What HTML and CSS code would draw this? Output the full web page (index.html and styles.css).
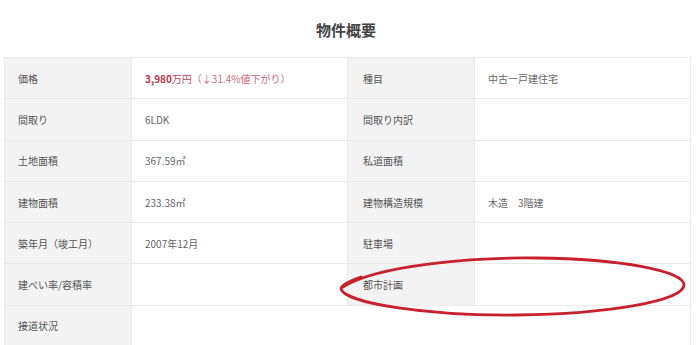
FILE: index.html
```html
<!DOCTYPE html>
<html lang="ja">
<head>
  <meta charset="UTF-8">
  <title>物件概要</title>
  <link rel="stylesheet" href="styles.css">
</head>
<body>
  <div class="wrap">
    <h2>物件概要</h2>
    <table class="spec">
      <tr>
        <th>価格</th>
        <td class="price"><strong>3,980</strong>万円<span class="down">（↓31.4%値下がり）</span></td>
        <th>種目</th>
        <td>中古一戸建住宅</td>
      </tr>
      <tr>
        <th>間取り</th>
        <td>6LDK</td>
        <th>間取り内訳</th>
        <td></td>
      </tr>
      <tr>
        <th>土地面積</th>
        <td>367.59㎡</td>
        <th>私道面積</th>
        <td></td>
      </tr>
      <tr>
        <th>建物面積</th>
        <td>233.38㎡</td>
        <th>建物構造規模</th>
        <td>木造　3階建</td>
      </tr>
      <tr>
        <th>築年月（竣工月）</th>
        <td>2007年12月</td>
        <th>駐車場</th>
        <td></td>
      </tr>
      <tr>
        <th>建ぺい率/容積率</th>
        <td></td>
        <th>都市計画</th>
        <td></td>
      </tr>
      <tr>
        <th>接道状況</th>
        <td colspan="3"></td>
      </tr>
    </table>

    <!-- hand-drawn circle around 都市計画 -->
    <svg class="mark" width="360" height="72" viewBox="0 0 360 72">
      <path d="M6 36 C 40 14, 140 6, 200 7 C 285 8, 347 20, 347 34 C 347 50, 270 63, 180 64 C 90 65, 8 52, 4 38 C 4 35, 12 30, 24 26"
            fill="none" stroke="#c8202c" stroke-width="2.8" stroke-linecap="round"/>
    </svg>
  </div>
</body>
</html>
```

FILE: styles.css
```css
body { margin: 0; background: #fff; font-family: "Noto Sans CJK JP", "Noto Sans", sans-serif; color: #666; }
.wrap { position: relative; padding: 0 12px 0 4px; }
h2 { margin: 0; padding: 20px 0 17px; font-size: 15px; line-height: 20px; text-align: center; color: #444; font-weight: bold; }
.spec { width: 684px; border-collapse: collapse; table-layout: fixed; font-size: 10px; }
.spec th, .spec td { height: 40.3px; padding: 0 13px; border: 1px solid #e9e9e9; text-align: left; font-weight: normal; white-space: nowrap; }
.spec th { width: 100px; background: #f3f3f3; color: #555; }
.spec td { width: 189px; background: #fff; }
.spec tr th:nth-child(3) { width: 98px; padding-left: 15px; }
.price { color: #c04656; }
.price strong { font-weight: bold; color: #b83448; }
.down { color: #c96a77; }
.mark { position: absolute; left: 337px; top: 251px; }
```
